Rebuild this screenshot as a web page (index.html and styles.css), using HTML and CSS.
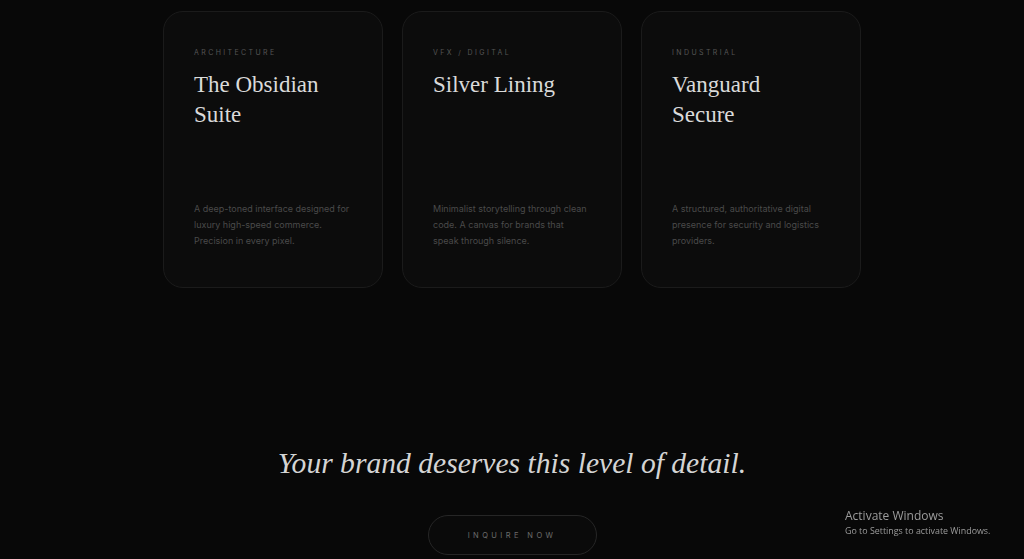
FILE: index.html
```html
<!DOCTYPE html>
<html lang="en">
<head>
    <meta charset="UTF-8">
    <meta name="viewport" content="width=device-width, initial-scale=1.0">
    <title>Selected Work</title>
    <link rel="stylesheet" href="styles.css">
</head>
<body>
    <section class="work">
        <div class="cards">
            <article class="card">
                <div class="card-label">Architecture</div>
                <h3 class="card-title">The Obsidian Suite</h3>
                <p class="card-text">A deep-toned interface designed for luxury high-speed commerce. Precision in every pixel.</p>
            </article>
            <article class="card">
                <div class="card-label">VFX / Digital</div>
                <h3 class="card-title">Silver Lining</h3>
                <p class="card-text">Minimalist storytelling through clean code. A canvas for brands that speak through silence.</p>
            </article>
            <article class="card">
                <div class="card-label">Industrial</div>
                <h3 class="card-title">Vanguard Secure</h3>
                <p class="card-text">A structured, authoritative digital presence for security and logistics providers.</p>
            </article>
        </div>
    </section>

    <section class="cta">
        <h2 class="cta-title">Your brand deserves this level of detail.</h2>
        <a class="cta-btn" href="#">Inquire Now</a>
    </section>

    <div class="activate">
        <div class="activate-title">Activate Windows</div>
        <div class="activate-sub">Go to Settings to activate Windows.</div>
    </div>
</body>
</html>
```

FILE: styles.css
```css
body {
    margin: 0;
    background-color: #080808;
    color: #d6d6d6;
    font-family: Inter, "Liberation Sans", sans-serif;
    height: 559px;
    overflow: hidden;
}

.work {
    padding-top: 11px;
}

.cards {
    display: grid;
    grid-template-columns: repeat(3, 220px);
    gap: 19px;
    justify-content: center;
}

.card {
    display: flex;
    flex-direction: column;
    height: 277px;
    box-sizing: border-box;
    padding: 37px 28px 38px 30px;
    background-color: #0c0c0c;
    border: 1px solid #1b1b1b;
    border-radius: 20px;
}

.card-label {
    font-size: 7px;
    letter-spacing: 2.4px;
    text-transform: uppercase;
    color: #555;
    line-height: 8px;
}

.card-title {
    margin: 13px 0 0 0;
    max-width: 140px;
    font-family: "Liberation Serif", serif;
    font-weight: 400;
    font-size: 23px;
    line-height: 30px;
    color: #dadada;
}

.card-text {
    margin: auto 0 0 0;
    max-width: 157px;
    font-size: 9px;
    line-height: 16px;
    color: #4a4a4a;
}

.cta {
    display: flex;
    flex-direction: column;
    align-items: center;
    padding-top: 155px;
}

.cta-title {
    margin: 0;
    font-family: "Liberation Serif", serif;
    font-style: italic;
    font-weight: 400;
    font-size: 29.6px;
    line-height: 40px;
    color: #d4d4d4;
}

.cta-btn {
    margin-top: 32px;
    width: 169px;
    height: 40px;
    box-sizing: border-box;
    display: flex;
    align-items: center;
    justify-content: center;
    border: 1px solid #262626;
    border-radius: 20px;
    background-color: #0a0a0a;
    color: #6c6c6c;
    text-decoration: none;
    font-size: 7.5px;
    letter-spacing: 3.4px;
    text-transform: uppercase;
}

/* system watermark sitting over the page */
.activate {
    position: fixed;
    left: 845px;
    top: 508px;
    font-family: "Open Sans", "Noto Sans", sans-serif;
    color: #9c9c9c;
}

.activate-title {
    font-size: 12px;
    line-height: 16px;
}

.activate-sub {
    font-size: 8.9px;
    line-height: 13px;
}
```
